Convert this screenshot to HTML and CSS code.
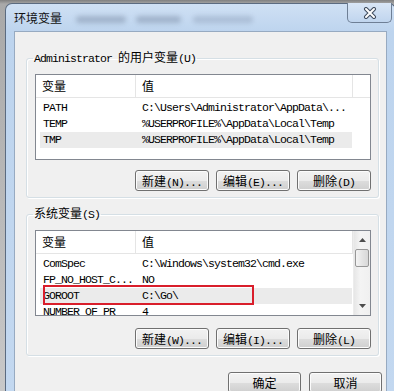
FILE: index.html
```html
<!DOCTYPE html>
<html lang="zh-CN">
<head>
    <meta charset="UTF-8">
    <meta name="viewport" content="width=device-width, initial-scale=1.0">
    <title>环境变量</title>
    <link rel="stylesheet" href="styles.css">
</head>
<body>
    <div class="window">
        <div class="titlebar">
            <span class="title">环境变量</span>
            <span class="glass-blur blur-a"></span>
            <span class="glass-blur blur-b"></span>
            <span class="glass-blur blur-c"></span>
            <button class="close-btn" type="button">
                <svg width="14" height="12" viewBox="0 0 14 12">
                    <path d="M3 2 L11 10 M11 2 L3 10" stroke="#3d4a5c" stroke-width="4" stroke-linecap="round"/>
                    <path d="M3 2 L11 10 M11 2 L3 10" stroke="#fff" stroke-width="2" stroke-linecap="round"/>
                </svg>
            </button>
        </div>

        <div class="frame">
            <div class="client">
                <!-- 用户变量 -->
                <fieldset class="group">
                    <legend><span class="en">Administrator </span>的用户变量<span class="en">(U)</span></legend>
                    <div class="listview">
                        <div class="list-main">
                            <div class="list-header">
                                <div class="col-name">变量</div>
                                <div class="col-value">值</div>
                                <div class="col-fill"></div>
                            </div>
                            <div class="list-body">
                                <div class="list-row"><div class="col-name mono">PATH</div><div class="col-value mono">C:\Users\Administrator\AppData\...</div></div>
                                <div class="list-row"><div class="col-name mono">TEMP</div><div class="col-value mono">%USERPROFILE%\AppData\Local\Temp</div></div>
                                <div class="list-row selected"><div class="col-name mono">TMP</div><div class="col-value mono">%USERPROFILE%\AppData\Local\Temp</div></div>
                            </div>
                        </div>
                    </div>
                    <div class="btn-row">
                        <button class="btn" type="button">新建<span class="en">(N)...</span></button>
                        <button class="btn" type="button">编辑<span class="en">(E)...</span></button>
                        <button class="btn" type="button">删除<span class="en">(D)</span></button>
                    </div>
                </fieldset>

                <!-- 系统变量 -->
                <fieldset class="group group-system">
                    <legend>系统变量<span class="en">(S)</span></legend>
                    <div class="listview">
                        <div class="list-main">
                            <div class="list-header">
                                <div class="col-name">变量</div>
                                <div class="col-value">值</div>
                            </div>
                            <div class="list-body">
                                <div class="list-row"><div class="col-name mono">ComSpec</div><div class="col-value mono">C:\Windows\system32\cmd.exe</div></div>
                                <div class="list-row"><div class="col-name mono">FP_NO_HOST_C...</div><div class="col-value mono">NO</div></div>
                                <div class="list-row selected">
                                    <div class="col-name mono">GOROOT</div><div class="col-value mono">C:\Go\</div>
                                    <div class="highlight"></div>
                                </div>
                                <div class="list-row"><div class="col-name mono">NUMBER_OF_PR</div><div class="col-value mono">4</div></div>
                            </div>
                        </div>
                        <div class="scrollbar">
                            <div class="sb-arrow">
                                <svg width="7" height="4" viewBox="0 0 7 4"><path d="M0 4 L3.5 0 L7 4 Z" fill="#4d4d4d"/></svg>
                            </div>
                            <div class="sb-thumb"></div>
                            <div class="sb-track"></div>
                            <div class="sb-arrow">
                                <svg width="7" height="4" viewBox="0 0 7 4"><path d="M0 0 L3.5 4 L7 0 Z" fill="#4d4d4d"/></svg>
                            </div>
                        </div>
                    </div>
                    <div class="btn-row">
                        <button class="btn" type="button">新建<span class="en">(W)...</span></button>
                        <button class="btn" type="button">编辑<span class="en">(I)...</span></button>
                        <button class="btn" type="button">删除<span class="en">(L)</span></button>
                    </div>
                </fieldset>

                <div class="dialog-buttons">
                    <button class="btn btn-dialog" type="button">确定</button>
                    <button class="btn btn-dialog" type="button">取消</button>
                </div>
            </div>
        </div>
    </div>
</body>
</html>
```

FILE: styles.css
```css
/* Windows 7 风格的环境变量对话框 */
* {
    box-sizing: border-box;
}

body {
    margin: 0;
    height: 391px;
    overflow: hidden;
    background: linear-gradient(#7f7f7f, #a9a9a9 4px, #c8c8c8);
    font-family: "Noto Sans CJK SC", sans-serif;
    font-size: 12px;
    color: #000;
}

.en,
.mono {
    font-family: "Liberation Mono", "Noto Sans CJK SC", monospace;
    font-size: 11.5px;
    letter-spacing: -0.9px;
}

.window {
    margin: 3px 0 0 5px;
    width: 391px;
    height: 400px;
    border: 1px solid #5b6b80;
    border-bottom: none;
    border-radius: 7px 7px 0 0;
    background: linear-gradient(#cfe0f4, #bdd4ee 28px, #c3d8f0);
}

.titlebar {
    display: flex;
    align-items: center;
    height: 27px;
    padding-left: 8px;
}

.title {
    line-height: 14px;
    color: #111;
}

.glass-blur {
    height: 7px;
    border-radius: 4px;
    background: rgba(80, 95, 120, 0.32);
    filter: blur(2.5px);
    margin-top: 3px;
}

.blur-a {
    width: 50px;
    margin-left: 14px;
}

.blur-b {
    width: 45px;
    margin-left: 10px;
}

.blur-c {
    width: 60px;
    margin-left: 12px;
    opacity: 0.7;
}

.close-btn {
    margin-left: auto;
    margin-right: 3px;
    align-self: flex-start;
    margin-top: -1px;
    width: 45px;
    height: 20px;
    padding: 0;
    border: 1px solid #6e7f95;
    border-top: none;
    border-radius: 0 0 5px 5px;
    background: linear-gradient(#d9e6f6, #c0d5ee);
    display: flex;
    align-items: center;
    justify-content: center;
}

.frame {
    padding: 0 8px;
}

.client {
    height: 372px;
    padding: 0 7px 0 11px;
    border: 1px solid #97aac1;
    background-color: #f0f0f0;
}

.group {
    margin: 18px 0 0;
    padding: 8px 7px 6px 8px;
    min-width: 0;
    border: 1px solid #d5dfe5;
    border-radius: 3px;
    box-shadow: inset 1px 1px 0 #fff, 1px 1px 0 #fff;
}

.group-system {
    margin-top: 8px;
}

.group legend {
    margin-left: -2px;
    padding: 0 1px;
    line-height: 14px;
}

.listview {
    display: flex;
    height: 86px;
    border: 1px solid #828790;
    background-color: #fff;
    overflow: hidden;
}

.list-main {
    flex: 1;
    min-width: 0;
}

.list-header {
    display: flex;
    height: 23px;
    border-bottom: 1px solid #e5e5e5;
    line-height: 22px;
}

.list-header .col-name {
    width: 100px;
    padding-left: 6px;
    border-right: 1px solid #e5e5e5;
}

.list-header .col-value {
    width: 217px;
    padding-left: 6px;
    border-right: 1px solid #e5e5e5;
}

.list-header .col-fill {
    flex: 1;
}

.list-body {
    padding-top: 2px;
}

.list-row {
    position: relative;
    display: flex;
    width: 312px;
    height: 16px;
    margin-left: 4px;
    line-height: 16px;
    white-space: nowrap;
}

.list-row.selected {
    background-color: #ebebeb;
}

.list-row .col-name {
    width: 96px;
    padding-left: 3px;
}

.list-row .col-value {
    padding-left: 6px;
}

/* 红色标注框 */
.highlight {
    position: absolute;
    left: 3px;
    top: -3px;
    width: 211px;
    height: 20px;
    border: 2px solid #d91e2b;
}

.scrollbar {
    display: flex;
    flex-direction: column;
    width: 17px;
    background: linear-gradient(to right, #e6e6e6, #f4f4f4 40%, #f0f0f0);
    border-left: 1px solid #ececec;
}

.sb-arrow {
    height: 18px;
    display: flex;
    align-items: center;
    justify-content: center;
}

.sb-thumb {
    height: 18px;
    margin: 0 1px;
    border: 1px solid #979797;
    border-radius: 2px;
    background: linear-gradient(to right, #f4f4f4, #e4e4e4 50%, #d8d8d8);
}

.sb-track {
    flex: 1;
}

.btn-row {
    display: flex;
    justify-content: flex-end;
    gap: 7px;
    margin-top: 10px;
}

.group-system .btn-row {
    margin-top: 12px;
}

.btn {
    width: 74px;
    height: 21px;
    padding: 0;
    border: 1px solid #707070;
    border-radius: 3px;
    background: linear-gradient(#f2f2f2, #ebebeb 50%, #dddddd 51%, #cfcfcf);
    box-shadow: inset 0 0 0 1px #fcfcfc;
    font-family: "Noto Sans CJK SC", sans-serif;
    font-size: 12px;
    line-height: 19px;
    color: #000;
}

.dialog-buttons {
    display: flex;
    justify-content: flex-end;
    gap: 8px;
    margin-top: 16px;
    margin-right: -3px;
}

.btn-dialog {
    width: 73px;
}
```
